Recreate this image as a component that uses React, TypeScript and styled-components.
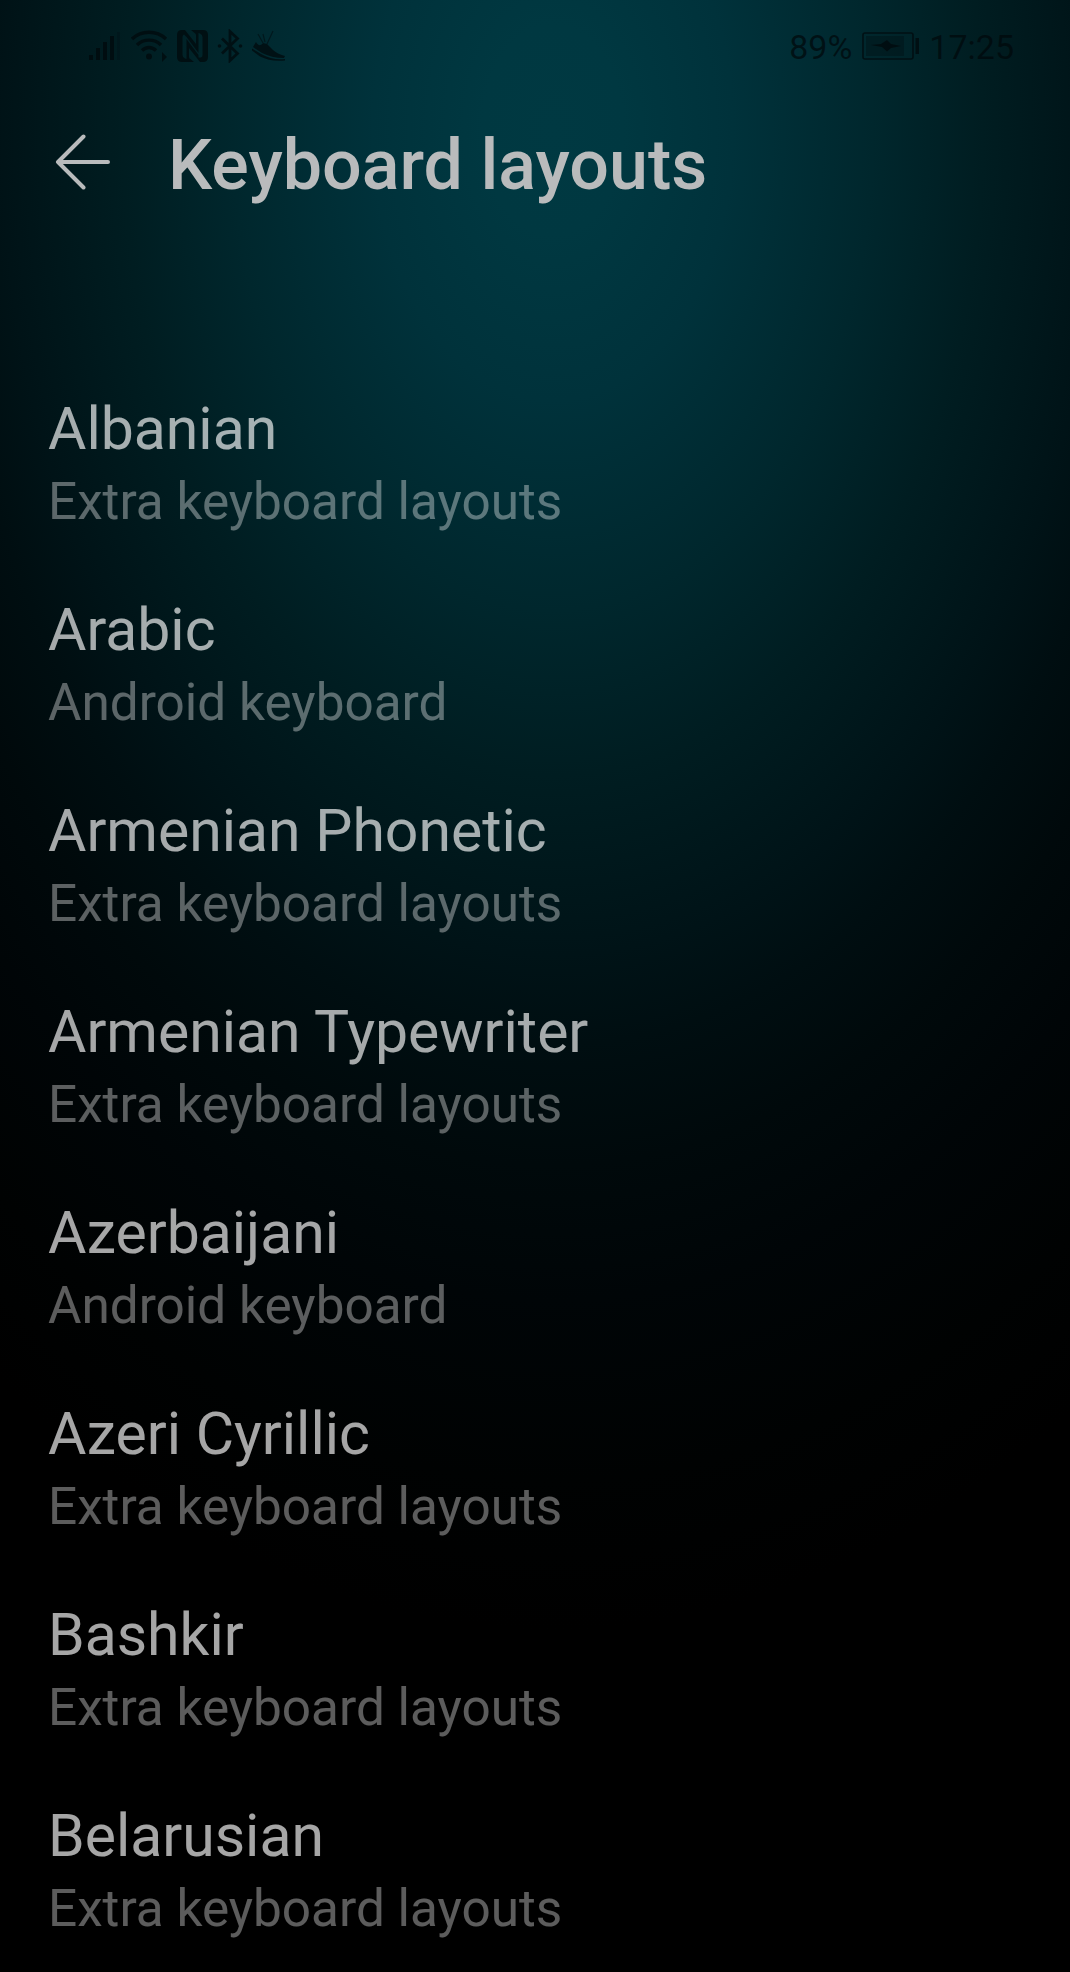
import React from "react";
import styled, { createGlobalStyle } from "styled-components";

const GlobalStyle = createGlobalStyle`
  *, *::before, *::after { box-sizing: border-box; }
  body { margin: 0; background: #000; }
`;

const Screen = styled.main`
  width: 1070px;
  height: 1972px;
  overflow: hidden;
  display: flex;
  flex-direction: column;
  font-family: Roboto, "Noto Sans", sans-serif;
  background:
    radial-gradient(
      ellipse 1000px 1500px at 553px 130px,
      rgb(0, 57, 66) 0%,
      rgb(0, 56, 65) 7%,
      rgb(0, 50, 59) 18%,
      rgb(0, 39, 45) 32%,
      rgb(0, 29, 33) 43%,
      rgb(0, 19, 23) 55%,
      rgb(0, 14, 17) 61%,
      rgb(0, 9, 11) 69%,
      rgb(0, 5, 7) 78%,
      rgb(0, 2, 2) 90%,
      rgb(0, 0, 0) 100%
    );
`;

const StatusBar = styled.header`
  flex: none;
  height: 92px;
  padding: 0 56px 0 88px;
  display: flex;
  align-items: center;
  justify-content: space-between;
  color: rgba(0, 8, 11, 0.72);
`;

const StatusGroup = styled.div<{ $gap: number }>`
  display: flex;
  align-items: center;
  gap: ${(p) => p.$gap}px;
`;

const StatusText = styled.span`
  padding-top: 2px;
  font-size: 34px;
  line-height: 40px;
`;

const AppBar = styled.div`
  flex: none;
  height: 140px;
  padding: 0 55px;
  display: flex;
  align-items: center;
`;

const BackButton = styled.button`
  width: 56px;
  height: 56px;
  margin: 0 57px 0 0;
  padding: 0;
  border: 0;
  background: none;
  color: #b9bbbc;
  display: flex;
  align-items: center;
`;

const Title = styled.h1`
  margin: 6px 0 0;
  font-size: 70px;
  font-weight: 500;
  line-height: 82px;
  color: #b9bbbc;
  white-space: nowrap;
`;

const List = styled.ul`
  flex: none;
  list-style: none;
  margin: 0;
  padding: 158px 48px 0;
`;

const Item = styled.li`
  height: 201px;
  display: flex;
  flex-direction: column;
  white-space: nowrap;
`;

const ItemName = styled.span`
  font-size: 58.9px;
  line-height: 78px;
  color: rgba(255, 255, 255, 0.65);
`;

const ItemSource = styled.span`
  font-size: 51.3px;
  line-height: 68px;
  color: rgba(255, 255, 255, 0.36);
`;

const SignalIcon = () => (
  <svg width="34" height="32" viewBox="0 0 34 32" fill="currentColor">
    <rect x="1" y="25" width="4" height="5" />
    <rect x="8" y="18" width="4" height="12" />
    <rect x="15" y="12" width="4" height="18" />
    <rect x="22" y="6" width="4" height="24" />
    <rect x="29" y="2" width="3" height="28" opacity="0.25" />
  </svg>
);

const WifiIcon = () => (
  <svg width="37" height="32" viewBox="0 0 37 32" fill="none" stroke="currentColor" strokeWidth="3.4">
    <path d="M1 9C10.500 0 25.500 0 35 9" />
    <path d="M6 15C12.500 8.500 23.500 8.500 30 15" />
    <path d="M11 20.500C15 16.500 21 16.500 25 20.500" />
    <circle cx="18" cy="26.500" r="3" fill="currentColor" stroke="none" />
    <path d="M31 22l5 5-5 5z" fill="currentColor" stroke="none" />
  </svg>
);

const NfcIcon = () => (
  <svg width="31" height="32" viewBox="0 0 31 32">
    <path
      fill="currentColor"
      fillRule="evenodd"
      d="M5 0H8L19 14V5Q19 3.500 17 2.500L14 0H26Q31 0 31 5V27Q31 32 26 32H23L12 18V27Q12 28.500 14 29.500L17 32H5Q0 32 0 27V5Q0 0 5 0ZM7 4.500Q5.500 5 5.500 7V25Q5.500 27.500 8 28.500L9.500 29V9L21.500 25V27.500H24Q25.500 27 25.500 25V7Q25.500 4.500 23 3.500L21.500 3V23L9.500 7Z"
    />
  </svg>
);

const BluetoothIcon = () => (
  <svg width="26" height="34" viewBox="0 0 26 34" fill="none" stroke="currentColor" strokeWidth="2.800">
    <path d="M5 9.500L20.500 24.500L13 31.500V2.500L20.500 9.500L5 24.500" />
    <circle cx="2.500" cy="17" r="1.800" fill="currentColor" stroke="none" />
    <circle cx="23.500" cy="17" r="1.800" fill="currentColor" stroke="none" />
  </svg>
);

const ShoeIcon = () => (
  <svg width="34" height="32" viewBox="0 0 34 32" fill="currentColor">
    <path d="M4 12C6 16 9 16 11 13L15 14L21 20C24 23 29 25 33 26L32 28C24 28 16 26 10 23L1 17Z" />
    <path d="M0 18.500L10 24.500C17 28.500 25 30 33 29V30.500C23 31.500 15 30 8 26.500L0 20.500Z" />
    <path d="M6 4L11 13M11 4L13 12M21 1L15 14" fill="none" stroke="currentColor" strokeWidth="1.200" opacity="0.7" />
  </svg>
);

const BatteryIcon = () => (
  <svg width="57" height="28" viewBox="0 0 57 28">
    <rect x="1" y="1" width="50" height="26" rx="2" fill="none" stroke="currentColor" strokeWidth="1.600" />
    <rect x="4" y="4" width="38" height="20" fill="currentColor" opacity="0.4" />
    <path d="M9 13L19 12L25 8L29 12L39 14L29 16L25 19.500L20 15Z" fill="currentColor" />
    <rect x="53.500" y="6" width="3.500" height="16" fill="currentColor" />
  </svg>
);

const BackIcon = () => (
  <svg
    width="56"
    height="56"
    viewBox="0 0 56 56"
    fill="none"
    stroke="currentColor"
    strokeWidth="4"
    strokeLinecap="round"
    strokeLinejoin="round"
  >
    <path d="M28.500 2.500L3 28L28.500 53.500M3 28H53" />
  </svg>
);

const EXTRA = "Extra keyboard layouts";
const ANDROID = "Android keyboard";

const layouts = [
  { name: "Albanian", source: EXTRA },
  { name: "Arabic", source: ANDROID },
  { name: "Armenian Phonetic", source: EXTRA },
  { name: "Armenian Typewriter", source: EXTRA },
  { name: "Azerbaijani", source: ANDROID },
  { name: "Azeri Cyrillic", source: EXTRA },
  { name: "Bashkir", source: EXTRA },
  { name: "Belarusian", source: EXTRA },
];

export default function App() {
  return (
    <>
      <GlobalStyle />
      <Screen>
        <StatusBar>
          <StatusGroup $gap={9}>
            <SignalIcon />
            <WifiIcon />
            <NfcIcon />
            <BluetoothIcon />
            <ShoeIcon />
          </StatusGroup>
          <StatusGroup $gap={10}>
            <StatusText>89%</StatusText>
            <BatteryIcon />
            <StatusText>17:25</StatusText>
          </StatusGroup>
        </StatusBar>
        <AppBar>
          <BackButton aria-label="Back">
            <BackIcon />
          </BackButton>
          <Title>Keyboard layouts</Title>
        </AppBar>
        <List>
          {layouts.map((l) => (
            <Item key={l.name}>
              <ItemName>{l.name}</ItemName>
              <ItemSource>{l.source}</ItemSource>
            </Item>
          ))}
        </List>
      </Screen>
    </>
  );
}
